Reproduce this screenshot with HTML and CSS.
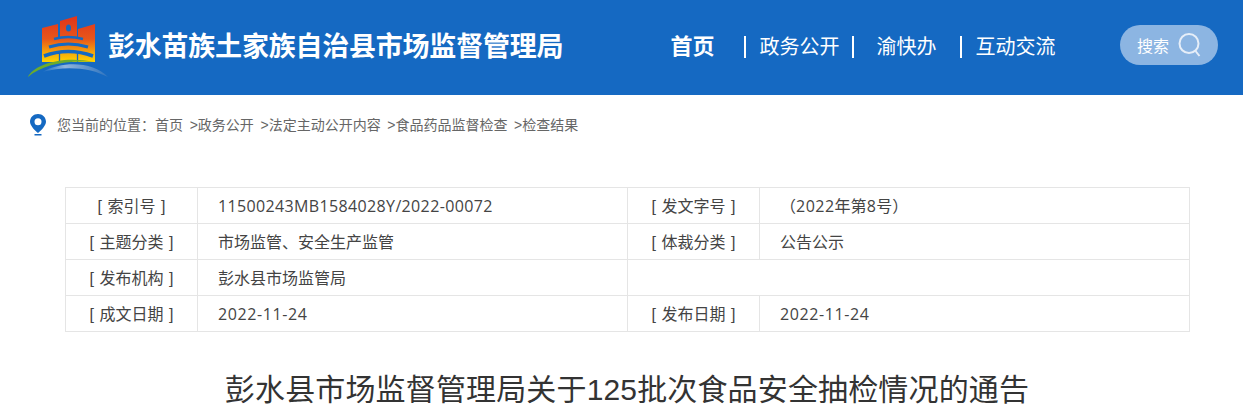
FILE: index.html
```html
<!DOCTYPE html>
<html lang="zh">
<head>
<meta charset="utf-8">
<title>彭水苗族土家族自治县市场监督管理局</title>
<link rel="stylesheet" href="styles.css">
</head>
<body>
<header class="top">
  <div class="brand">
    <svg class="logo" width="81" height="62" viewBox="0 0 81 62">
      <defs>
        <linearGradient id="g" gradientUnits="userSpaceOnUse" x1="0" y1="0" x2="0" y2="46">
          <stop offset="0" stop-color="#e0341c"/>
          <stop offset=".5" stop-color="#e8561a"/>
          <stop offset=".8" stop-color="#f6a80c"/>
          <stop offset="1" stop-color="#ffd400"/>
        </linearGradient>
        <linearGradient id="w" x1="0" y1="0" x2="1" y2="0">
          <stop offset="0" stop-color="#1569c2"/>
          <stop offset=".35" stop-color="#8fb4dc"/>
          <stop offset="1" stop-color="#2f74bf"/>
        </linearGradient>
      </defs>
      <path fill="url(#g)" d="M14 12 L30 8 V22 H32 V5 L49 0 V22 H50 V13 L67 8 V46 H14 Z"/>
      <ellipse cx="40.500" cy="12" rx="2.500" ry="3.500" fill="#1569c2"/>
      <g fill="none" stroke="#1569c2">
        <path stroke-width="2.500" d="M26 23 Q40 19 55 23"/>
        <path stroke-width="3" d="M21 31 Q40 25 60 31"/>
        <path stroke-width="3.500" d="M16 40 Q40 31 65 40"/>
        <path stroke-width="1.300" d="M31.500 37 V46 M49.500 37 V46"/>
      </g>
      <path fill="#6aab2e" d="M0 61 C5 49 34 39 66 46 C38 44 14 49 0 61 Z"/>
      <path fill="url(#w)" d="M14 56 C36 44 66 46 80 61 C64 52 38 49 14 56 Z"/>
    </svg>
    <h1 class="site">彭水苗族土家族自治县市场监督管理局</h1>
  </div>
  <nav class="nav">
    <a class="home">首页</a>
    <a class="item first">政务公开</a>
    <a class="item second">渝快办</a>
    <a class="item third">互动交流</a>
  </nav>
  <div class="search">
    <span>搜索</span>
    <svg width="26" height="26" viewBox="0 0 26 26" fill="none" stroke="#e6eef8" stroke-width="2">
      <circle cx="12" cy="11.500" r="9.500"/>
      <path d="M18.500 19 L22.500 24"/>
    </svg>
  </div>
</header>

<div class="crumb">
  <svg width="16" height="22" viewBox="0 0 16 22">
    <path fill="#1569c2" fill-rule="evenodd" d="M8 0 C3.500 0 0 3.400 0 7.700 C0 11.500 5 16.500 8 19 C11 16.500 16 11.500 16 7.700 C16 3.400 12.500 0 8 0 Z M8 4.300 A3.500 3.500 0 1 1 8 11.300 A3.500 3.500 0 1 1 8 4.300 Z"/>
    <rect x="4.500" y="20" width="7" height="1.500" fill="#1569c2"/>
  </svg>
  <span class="path">您当前的位置：首页 &gt;政务公开 &gt;法定主动公开内容 &gt;食品药品监督检查 &gt;检查结果</span>
</div>

<table class="meta">
  <tr><th>[ 索引号 ]</th><td class="num code">11500243MB1584028Y/2022-00072</td><th>[ 发文字号 ]</th><td>（<span class="num">2022</span>年第<span class="num">8</span>号）</td></tr>
  <tr><th>[ 主题分类 ]</th><td>市场监管、安全生产监管</td><th>[ 体裁分类 ]</th><td>公告公示</td></tr>
  <tr><th>[ 发布机构 ]</th><td>彭水县市场监管局</td><td class="blank" colspan="2"></td></tr>
  <tr><th>[ 成文日期 ]</th><td class="num date">2022-11-24</td><th>[ 发布日期 ]</th><td class="num date">2022-11-24</td></tr>
</table>

<h2 class="title">彭水县市场监督管理局关于125批次食品安全抽检情况的通告</h2>
</body>
</html>
```
FILE: styles.css
```css
* { box-sizing: border-box; }
html, body { margin: 0; padding: 0; height: 412px; overflow: hidden; background: #fff; }
body { font-family: "Liberation Sans", "Noto Sans CJK SC", sans-serif; color: #333; }

.top { height: 95px; padding-bottom: 2px; background: #1569c2; display: flex; align-items: center; color: #fff; }
.brand { display: flex; align-items: center; margin-left: 28px; width: 620px; }
.logo { display: block; }
.site { margin: 0 0 0 -1px; font-size: 27px; font-weight: 700; line-height: 34px; white-space: nowrap; letter-spacing: -.22px; }

.nav { display: flex; align-items: center; margin-left: 23px; width: 450px; font-size: 20px; line-height: 22px; }
.nav a { display: block; white-space: nowrap; }
.home { font-weight: 700; font-size: 22px; width: 79px; }
.item { border-left: 2px solid #fff; height: 22px; }
.first { padding-left: 13px; width: 108px; margin-left: -5px; }
.second { padding-left: 22px; width: 108px; }
.third { padding-left: 13px; }

.search { width: 98px; height: 40px; margin-bottom: 3px; margin-left: auto; margin-right: 25px; border-radius: 20px; background: #8cb5e2; display: flex; align-items: center; padding-left: 17px; gap: 8px; font-size: 16px; }

.crumb { display: flex; align-items: center; height: 22px; margin: 19px 0 0 30px; gap: 11px; font-size: 14px; color: #666; }
.path { word-spacing: 2.750px; padding-bottom: 2px; }

.meta { border-collapse: collapse; table-layout: fixed; width: 1125px; margin: 51px 0 0 65px; font-size: 16px; }
.meta th, .meta td { border: 1px solid #e5e5e5; height: 36px; padding: 0 0 2px; font-weight: 400; color: #444; }
.meta th { width: 132px; text-align: center; word-spacing: 1px; }
.meta td { width: 430px; padding-left: 20px; }
.meta td.blank { width: auto; }
.num { font-family: "Open Sans", "Noto Sans CJK SC", sans-serif; letter-spacing: .5px; }
.meta td.code { letter-spacing: .36px; padding-bottom: 0; }
.meta td.date { letter-spacing: .6px; padding-bottom: 0; }

.title { margin: 30px 0 0; text-align: center; font-size: 30px; line-height: 56px; font-weight: 400; color: #333; padding-left: 11px; letter-spacing: .15px; white-space: nowrap; }
```
